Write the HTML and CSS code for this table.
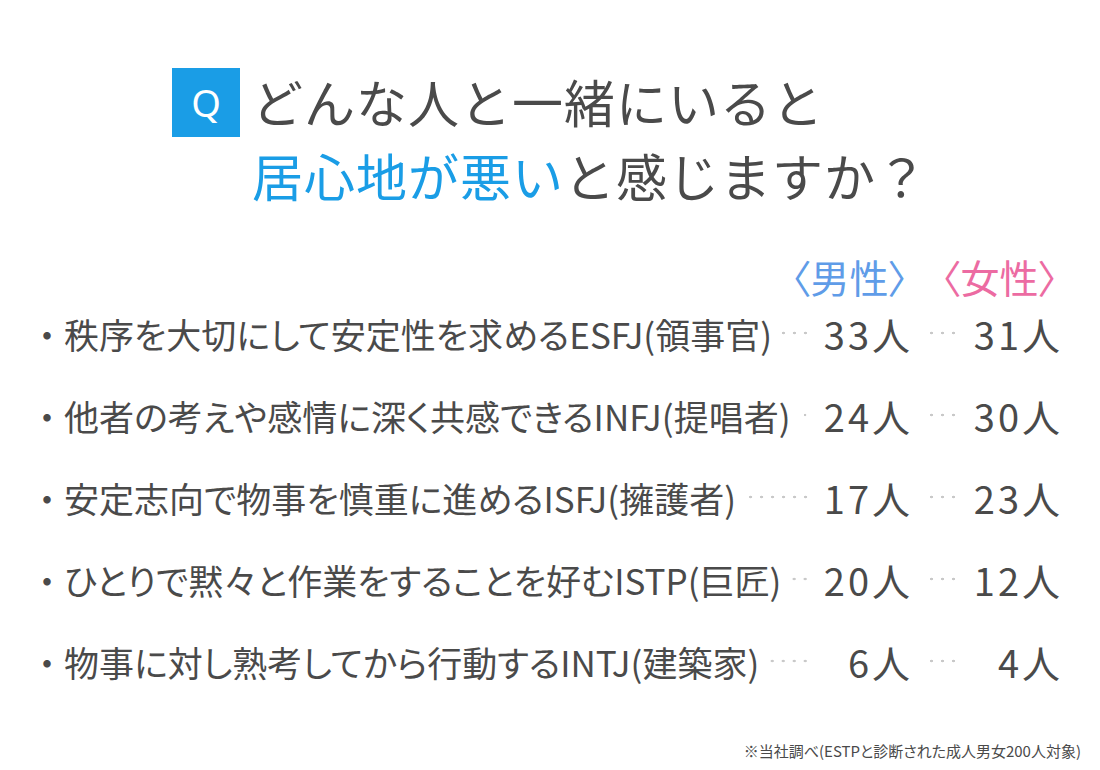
FILE: index.html
```html
<!DOCTYPE html>
<html lang="ja">
<head>
<meta charset="utf-8">
<title>どんな人と一緒にいると居心地が悪いと感じますか？</title>
<link rel="stylesheet" href="styles.css">
</head>
<body>
<div class="page">
  <header class="question">
    <div class="q-badge">Q</div>
    <h1 class="q-title">
      <span class="line">どんな人と一緒にいると</span>
      <span class="line"><span class="accent">居心地が悪い</span>と感じますか？</span>
    </h1>
  </header>

  <section class="table">
    <div class="head">
      <span class="sex male">〈男性〉</span>
      <span class="sex female">〈女性〉</span>
    </div>
    <div class="row">
      <div class="label"><span class="bullet">・</span><span class="text">秩序を大切にして安定性を求めるESFJ(領事官)</span><span class="leader"></span></div>
      <div class="num">33人</div>
      <div class="gap leader"></div>
      <div class="num">31人</div>
    </div>
    <div class="row">
      <div class="label"><span class="bullet">・</span><span class="text">他者の考えや感情に深く共感できるINFJ(提唱者)</span><span class="leader"></span></div>
      <div class="num">24人</div>
      <div class="gap leader"></div>
      <div class="num">30人</div>
    </div>
    <div class="row">
      <div class="label"><span class="bullet">・</span><span class="text">安定志向で物事を慎重に進めるISFJ(擁護者)</span><span class="leader"></span></div>
      <div class="num">17人</div>
      <div class="gap leader"></div>
      <div class="num">23人</div>
    </div>
    <div class="row">
      <div class="label"><span class="bullet">・</span><span class="text">ひとりで黙々と作業をすることを好むISTP(巨匠)</span><span class="leader"></span></div>
      <div class="num">20人</div>
      <div class="gap leader"></div>
      <div class="num">12人</div>
    </div>
    <div class="row">
      <div class="label"><span class="bullet">・</span><span class="text">物事に対し熟考してから行動するINTJ(建築家)</span><span class="leader"></span></div>
      <div class="num">6人</div>
      <div class="gap leader"></div>
      <div class="num">4人</div>
    </div>
  </section>

  <p class="note">※当社調べ(ESTPと診断された成人男女200人対象)</p>
</div>
</body>
</html>
```

FILE: styles.css
```css
html, body {
  margin: 0;
  padding: 0;
  background: #ffffff;
}

.page {
  width: 1100px;
  height: 770px;
  box-sizing: border-box;
  padding: 64px 40px 0 30px;
  font-family: "Noto Sans CJK JP", "Noto Sans", sans-serif;
  font-feature-settings: "palt";
  color: #4a4a4a;
}

.question {
  display: flex;
  align-items: flex-start;
  gap: 12px;
  padding-left: 142px;
}

.q-badge {
  width: 68px;
  height: 69px;
  margin-top: 4px;
  background: #1a9de6;
  color: #ffffff;
  font-family: "Noto Sans", sans-serif;
  font-size: 38px;
  line-height: 69px;
  text-align: center;
}

.q-title {
  margin: 0;
  font-weight: 400;
  font-size: 51px;
  line-height: 74px;
  letter-spacing: 1px;
  font-feature-settings: normal;
}

.q-title .line {
  display: block;
}

.accent {
  color: #1a9de6;
}

.table {
  margin-top: 48px;
}

.head {
  display: flex;
  justify-content: flex-end;
  gap: 33px;
  height: 32px;
  line-height: 32px;
  font-size: 39px;
  padding-right: 2px;
}

.male {
  color: #5f9ce8;
}

.female {
  color: #ec6ba2;
}

.row {
  display: grid;
  grid-template-columns: 1fr 95px 55px 95px;
  grid-template-rows: 82px;
  align-items: center;
  height: 82px;
  font-size: 35px;
}

.label {
  display: flex;
  align-items: center;
  min-width: 0;
}

.bullet {
  width: 34px;
  flex: none;
  text-align: center;
}

.text {
  white-space: nowrap;
}

.leader {
  align-self: stretch;
  flex: 1;
  margin: 0 4px 0 10px;
  background-image: radial-gradient(circle, #c8c8c8 1.1px, transparent 1.6px);
  background-size: 11px 6px;
  background-repeat: repeat-x;
  background-position: right center;
}

.gap.leader {
  margin: 0 6px 0 13px;
}

.num {
  text-align: right;
  white-space: nowrap;
  font-size: 38px;
  letter-spacing: 3px;
  margin-right: -3px;
}

.note {
  margin: 39px -30px 0 0;
  padding-right: 9px;
  text-align: right;
  font-size: 15px;
  line-height: 20px;
}
```
